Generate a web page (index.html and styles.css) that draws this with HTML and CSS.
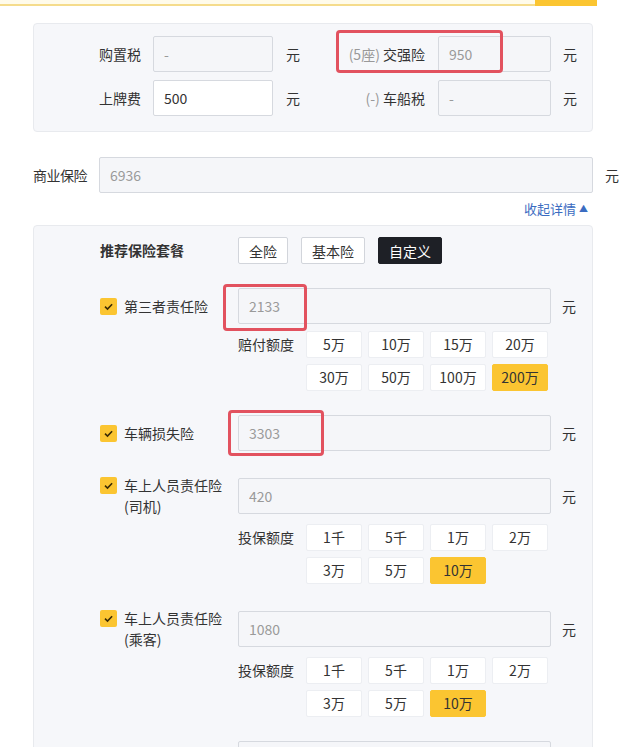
FILE: index.html
```html
<!DOCTYPE html>
<html>
	<head>
		<meta charset="UTF-8">
		<title>费用明细</title>
		<link rel="stylesheet" href="styles.css">
	</head>
	<body>
		<div class="topbar">
			<div class="topbar-line"></div>
			<div class="topbar-tab"></div>
		</div>
		<div id="container">
			<div class="panel fees">
				<div class="fee-row">
					<div class="fee fee-left">
						<span class="fee-label">购置税</span>
						<input class="box disabled" type="text" value="-" readonly>
						<span class="unit">元</span>
					</div>
					<div class="fee fee-right">
						<span class="fee-label"><em>(5座)</em> 交强险</span>
						<input class="box disabled" type="text" value="950" readonly>
						<span class="unit">元</span>
						<i class="mark mark-jq"></i>
					</div>
				</div>
				<div class="fee-row">
					<div class="fee fee-left">
						<span class="fee-label">上牌费</span>
						<input class="box" type="text" value="500">
						<span class="unit">元</span>
					</div>
					<div class="fee fee-right">
						<span class="fee-label"><em>(-)</em> 车船税</span>
						<input class="box disabled" type="text" value="-" readonly>
						<span class="unit">元</span>
					</div>
				</div>
			</div>

			<div class="biz-row">
				<span class="biz-label">商业保险</span>
				<input class="box disabled biz-input" type="text" value="6936" readonly>
				<span class="unit">元</span>
			</div>
			<div class="collapse"><a href="">收起详情 <small>▲</small></a></div>

			<div class="panel detail">
				<div class="pack-row">
					<span class="pack-label">推荐保险套餐</span>
					<button class="pack">全险</button>
					<button class="pack">基本险</button>
					<button class="pack active">自定义</button>
				</div>

				<div class="item">
					<div class="item-head">
						<label class="check"><span class="tick"><svg width="17" height="17" viewBox="0 0 17 17"><path d="M5 8.6l2.5 2.4 4.6-4.8" fill="none" stroke="#3b2c05" stroke-width="1.6"/></svg></span><span class="name">第三者责任险</span></label>
						<div class="field">
							<input class="box disabled wide" type="text" value="2133" readonly>
							<i class="mark mark-dsz"></i>
						</div>
						<span class="unit">元</span>
					</div>
					<div class="opts">
						<span class="opts-label">赔付额度</span>
						<div class="opt-grid">
							<span class="opt">5万</span>
							<span class="opt">10万</span>
							<span class="opt">15万</span>
							<span class="opt">20万</span>
							<span class="opt">30万</span>
							<span class="opt">50万</span>
							<span class="opt">100万</span>
							<span class="opt on">200万</span>
						</div>
					</div>
				</div>

				<div class="item">
					<div class="item-head">
						<label class="check"><span class="tick"><svg width="17" height="17" viewBox="0 0 17 17"><path d="M5 8.6l2.5 2.4 4.6-4.8" fill="none" stroke="#3b2c05" stroke-width="1.6"/></svg></span><span class="name">车辆损失险</span></label>
						<div class="field">
							<input class="box disabled wide" type="text" value="3303" readonly>
							<i class="mark mark-cs"></i>
						</div>
						<span class="unit">元</span>
					</div>
				</div>

				<div class="item">
					<div class="item-head">
						<label class="check"><span class="tick"><svg width="17" height="17" viewBox="0 0 17 17"><path d="M5 8.6l2.5 2.4 4.6-4.8" fill="none" stroke="#3b2c05" stroke-width="1.6"/></svg></span><span class="name">车上人员责任险<br>(司机)</span></label>
						<div class="field">
							<input class="box disabled wide" type="text" value="420" readonly>
						</div>
						<span class="unit">元</span>
					</div>
					<div class="opts">
						<span class="opts-label">投保额度</span>
						<div class="opt-grid">
							<span class="opt">1千</span>
							<span class="opt">5千</span>
							<span class="opt">1万</span>
							<span class="opt">2万</span>
							<span class="opt">3万</span>
							<span class="opt">5万</span>
							<span class="opt on">10万</span>
						</div>
					</div>
				</div>

				<div class="item">
					<div class="item-head">
						<label class="check"><span class="tick"><svg width="17" height="17" viewBox="0 0 17 17"><path d="M5 8.6l2.5 2.4 4.6-4.8" fill="none" stroke="#3b2c05" stroke-width="1.6"/></svg></span><span class="name">车上人员责任险<br>(乘客)</span></label>
						<div class="field">
							<input class="box disabled wide" type="text" value="1080" readonly>
						</div>
						<span class="unit">元</span>
					</div>
					<div class="opts">
						<span class="opts-label">投保额度</span>
						<div class="opt-grid">
							<span class="opt">1千</span>
							<span class="opt">5千</span>
							<span class="opt">1万</span>
							<span class="opt">2万</span>
							<span class="opt">3万</span>
							<span class="opt">5万</span>
							<span class="opt on">10万</span>
						</div>
					</div>
				</div>

				<div class="item">
					<div class="item-head">
						<div class="check"></div>
						<div class="field">
							<input class="box disabled wide" type="text" value="" readonly>
						</div>
					</div>
				</div>
			</div>
		</div>
	</body>
</html>
```

FILE: styles.css
```css
* {
	margin: 0;
	padding: 0;
	box-sizing: border-box;
}
body {
	font-family: "Noto Sans CJK SC", "Microsoft YaHei", sans-serif;
	font-size: 14px;
	color: #333;
	background-color: #fff;
	overflow: hidden;
}
.topbar {
	display: flex;
	width: 597px;
	height: 6px;
}
.topbar-line {
	flex: 1;
	height: 6px;
	background-color: #fffbea;
	border-bottom: 2px solid #f5dc8c;
}
.topbar-tab {
	width: 62px;
	height: 6px;
	background-color: #fbc531;
}
#container {
	padding-left: 33px;
	width: 640px;
}
.panel {
	width: 560px;
	background-color: #f6f7fa;
	border: 1px solid #e8eaee;
	border-radius: 4px;
}
.box {
	height: 36px;
	border: 1px solid #d6d9df;
	border-radius: 2px;
	background-color: #fff;
	padding: 0 10px;
	font-family: inherit;
	font-size: 14px;
	color: #333;
	outline: none;
}
.box.disabled {
	background-color: #f5f6f9;
	color: #9a9a9a;
}
.unit {
	line-height: 36px;
	color: #333;
}

/* 税费 */
.fees {
	margin-top: 17px;
	padding: 12px 0 15px 0;
	display: flex;
	flex-direction: column;
	gap: 8px;
}
.fee-row {
	display: flex;
}
.fee {
	display: flex;
	align-items: center;
	position: relative;
}
.fee-label {
	text-align: right;
	white-space: nowrap;
}
.fee-label em {
	font-style: normal;
	color: #999;
}
.fee-left .fee-label {
	width: 107px;
	margin-right: 12px;
}
.fee-left .box {
	width: 120px;
}
.fee-left .unit {
	margin-left: 13px;
	width: 14px;
}
.fee-right {
	margin-left: 20px;
}
.fee-right .fee-label {
	width: 105px;
	margin-right: 13px;
}
.fee-right .box {
	width: 113px;
}
.fee-right .unit {
	margin-left: 12px;
}

/* 标注框 */
.mark {
	position: absolute;
	border: 3px solid #e2525f;
	border-radius: 4px;
	pointer-events: none;
}
.mark-jq {
	left: 16px;
	top: -6px;
	width: 167px;
	height: 43px;
}
.mark-dsz {
	left: -15px;
	top: -4px;
	width: 84px;
	height: 47px;
}
.mark-cs {
	left: -10px;
	top: -5px;
	width: 96px;
	height: 46px;
}

/* 商业保险 */
.biz-row {
	display: flex;
	align-items: center;
	margin-top: 25px;
}
.biz-label {
	width: 54px;
	margin-right: 12px;
	white-space: nowrap;
	letter-spacing: -0.5px;
	flex-shrink: 0;
}
.biz-input {
	width: 494px;
}
.biz-row .unit {
	margin-left: 12px;
}
.collapse {
	width: 560px;
	margin-top: 6px;
	padding-right: 5px;
	text-align: right;
	line-height: 18px;
}
.collapse a {
	color: #3b6cc1;
	text-decoration: none;
	font-size: 13px;
}
.collapse small {
	font-size: 9px;
	vertical-align: 2px;
}

/* 险种明细 */
.detail {
	margin-top: 7px;
	padding: 11px 0 0 66px;
	height: 540px;
}
.pack-row {
	display: flex;
	align-items: center;
	height: 27px;
}
.pack-label {
	width: 138px;
	font-weight: bold;
	margin-top: -1px;
}
.pack {
	height: 27px;
	padding: 0 10px;
	margin-right: 13px;
	border: 1px solid #d2d5db;
	border-radius: 2px;
	background-color: #fff;
	font-family: inherit;
	font-size: 14px;
	color: #333;
}
.pack.active {
	background-color: #1e2026;
	border-color: #1e2026;
	color: #fff;
}
.item {
	margin-top: 24px;
}
.item-head {
	display: flex;
	align-items: center;
	min-height: 36px;
}
.check {
	width: 138px;
	display: flex;
	align-items: flex-start;
	line-height: 21px;
}
.tick {
	width: 17px;
	height: 17px;
	margin: 2px 7px 0 0;
	flex-shrink: 0;
	background-color: #fbc531;
	border-radius: 2px;
	display: flex;
}
.field {
	position: relative;
}
.box.wide {
	width: 313px;
}
.item-head .unit {
	margin-left: 11px;
}
.opts {
	display: flex;
	margin-top: 7px;
	margin-left: 138px;
}
.opts-label {
	width: 68px;
	line-height: 27px;
}
.opt-grid {
	display: grid;
	grid-template-columns: repeat(4, 56px);
	gap: 6px;
}
.opt {
	height: 27px;
	line-height: 25px;
	text-align: center;
	background-color: #fff;
	border: 1px solid #eceef2;
	border-radius: 2px;
	color: #333;
}
.opt.on {
	background-color: #fbc531;
	border-color: #fbc531;
}
```
